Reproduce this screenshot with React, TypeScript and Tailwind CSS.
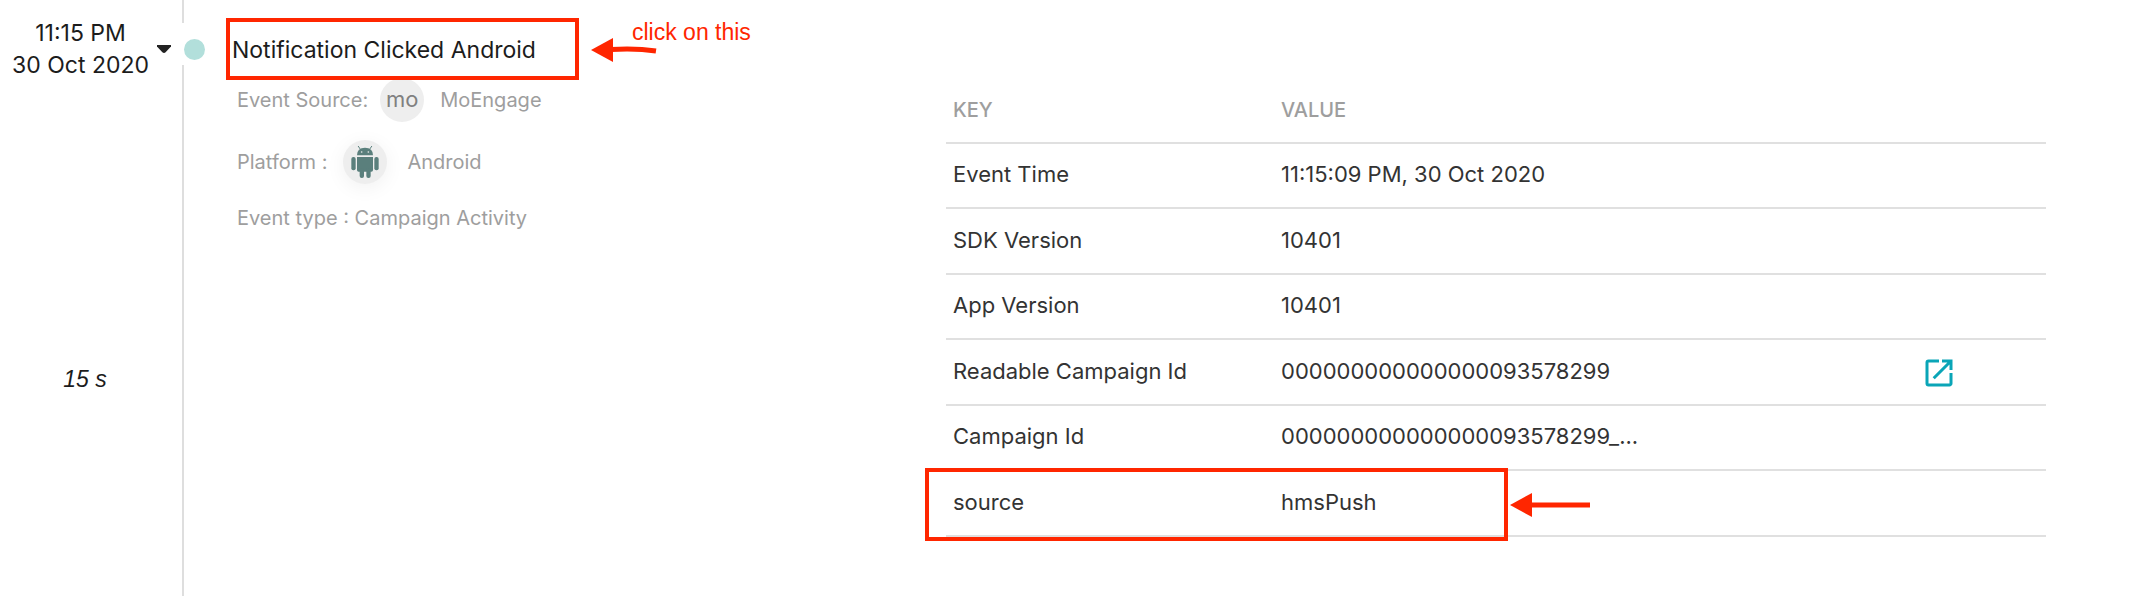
import React from 'react';
import { MdOpenInNew } from 'react-icons/md';

const rows = [
  { key: 'Event Time', value: '11:15:09 PM, 30 Oct 2020' },
  { key: 'SDK Version', value: '10401' },
  { key: 'App Version', value: '10401' },
  { key: 'Readable Campaign Id', value: '000000000000000093578299', link: true },
  { key: 'Campaign Id', value: '000000000000000093578299_...' },
  { key: 'source', value: 'hmsPush', marked: true },
];

function AndroidIcon() {
  return (
    <svg width="28" height="32" viewBox="0 0 84 96" className="block fill-[#5a7f7c]">
      <path d="M22 1L29 11M62 1L55 11" stroke="#5a7f7c" strokeWidth="3" strokeLinecap="round" />
      <path d="M18 28Q18 5 42 5Q66 5 66 28Z" />
      <circle cx="32" cy="18" r="2.5" fill="#eee" />
      <circle cx="52" cy="18" r="2.5" fill="#eee" />
      <path d="M18 33H66V72Q66 77 61 77H23Q18 77 18 72Z" />
      <rect x="1" y="33" width="13" height="40" rx="6" />
      <rect x="70" y="33" width="13" height="40" rx="6" />
      <rect x="26" y="66" width="13" height="30" rx="6" />
      <rect x="46" y="66" width="13" height="30" rx="6" />
    </svg>
  );
}

function EventTime() {
  return (
    <div className="w-[182px] shrink-0 pt-[17px] text-[23px] text-[#1c1c1c]">
      <div className="flex items-center">
        <div className="w-[161px] text-center leading-8">
          <div>11:15 PM</div>
          <div>30 Oct 2020</div>
        </div>
        <button type="button" aria-label="Collapse event" className="-ml-1">
          <svg width="14" height="8" viewBox="0 0 14 8" className="block fill-[#222]">
            <path d="M0 0H14V1.5L8.6 7.2Q7 8.6 5.4 7.2L0 1.5Z" />
          </svg>
        </button>
      </div>
      <div className="mt-[282px] w-[170px] text-center font-['Liberation_Sans',sans-serif] leading-8 italic">15 s</div>
    </div>
  );
}

function Rail() {
  return (
    <div className="flex w-11 shrink-0 flex-col">
      <div className="h-[23px] w-[2px] bg-[#dedede]"></div>
      <div className="flex h-[42px] items-center pt-[10px] pl-[2px]">
        <div className="size-[21px] rounded-full bg-[#b2dfdb]"></div>
      </div>
      <div className="w-[2px] flex-1 bg-[#dedede]"></div>
    </div>
  );
}

function EventDetails() {
  return (
    <div className="w-[720px] shrink-0 pt-[18px]">
      <div className="flex">
        <button type="button" className="relative h-[62px] w-[353px] border-4 border-[#ff2600] pt-[2px] pl-[2px] text-left text-[23px] text-[#1c1c1c]">
          Notification Clicked Android
        </button>
        <div className="relative ml-3">
          <svg width="66" height="24" viewBox="0 0 66 24" className="mt-5 block">
            <path d="M0 12L22 0V24Z" fill="#ff2600" />
            <path d="M20 11.5Q45 10 65 13" fill="none" stroke="#ff2600" strokeWidth="5" />
          </svg>
          <span className="absolute top-0 left-[41px] font-['Liberation_Sans',sans-serif] text-[23px] leading-7 whitespace-nowrap text-[#ff2600]">click on this</span>
        </div>
      </div>
      <div className="pl-[11px] text-xl text-[#9e9e9e]">
        <div className="flex h-10 items-center">
          <span>Event Source:</span>
          <span className="mr-4 ml-3 flex size-11 items-center justify-center rounded-full bg-[#eee] pb-[2px] text-[22px] leading-none text-[#808080]">mo</span>
          <span>MoEngage</span>
        </div>
        <div className="mt-5 flex h-11 items-center">
          <span>Platform :</span>
          <span className="mr-5 ml-4 flex size-11 items-center justify-center rounded-full bg-[#eee] shadow-[0_4px_20px_rgba(0,0,0,0.06)]">
            <AndroidIcon />
          </span>
          <span>Android</span>
        </div>
        <div className="mt-[18px] leading-8">Event type : Campaign Activity</div>
      </div>
    </div>
  );
}

function AttributeTable() {
  return (
    <div className="min-w-0 flex-1 pt-[78px] pr-[94px]">
      <table className="w-full table-fixed border-collapse text-left">
        <thead>
          <tr className="h-[65px] border-b-2 border-[#e0e0e0] text-xl text-[#9e9e9e]">
            <th className="w-[328px] px-[7px] font-medium">KEY</th>
            <th className="px-[7px] font-medium">VALUE</th>
            <th className="w-[214px]"></th>
          </tr>
        </thead>
        <tbody className="text-[22px] text-[#333]">
          {rows.map((row) => (
            <tr key={row.key} className="border-b-2 border-[#e0e0e0] odd:h-[65px] even:h-[66px]">
              <td className="relative px-[7px] pb-[2px]">
                {row.key}
                {row.marked && (
                  <div className="pointer-events-none absolute -top-[3px] -left-[21px] flex h-[73px] items-center">
                    <div className="h-full w-[583px] border-4 border-[#ff2600]"></div>
                    <svg width="81" height="24" viewBox="0 0 81 24" className="ml-[2px] block">
                      <path d="M0 12L22 0V24Z" fill="#ff2600" />
                      <path d="M20 12H80" stroke="#ff2600" strokeWidth="5" />
                    </svg>
                  </div>
                )}
              </td>
              <td className="px-[7px] pb-[2px]">{row.value}</td>
              <td>
                {row.link && (
                  <a href="#campaign" aria-label="Open campaign" className="flex justify-center pt-[2px] text-[#0aa5b7]">
                    <MdOpenInNew size={36} />
                  </a>
                )}
              </td>
            </tr>
          ))}
        </tbody>
      </table>
    </div>
  );
}

export default function App() {
  return (
    <main className="flex min-h-screen bg-white font-[Inter,sans-serif]">
      <EventTime />
      <Rail />
      <EventDetails />
      <AttributeTable />
    </main>
  );
}
